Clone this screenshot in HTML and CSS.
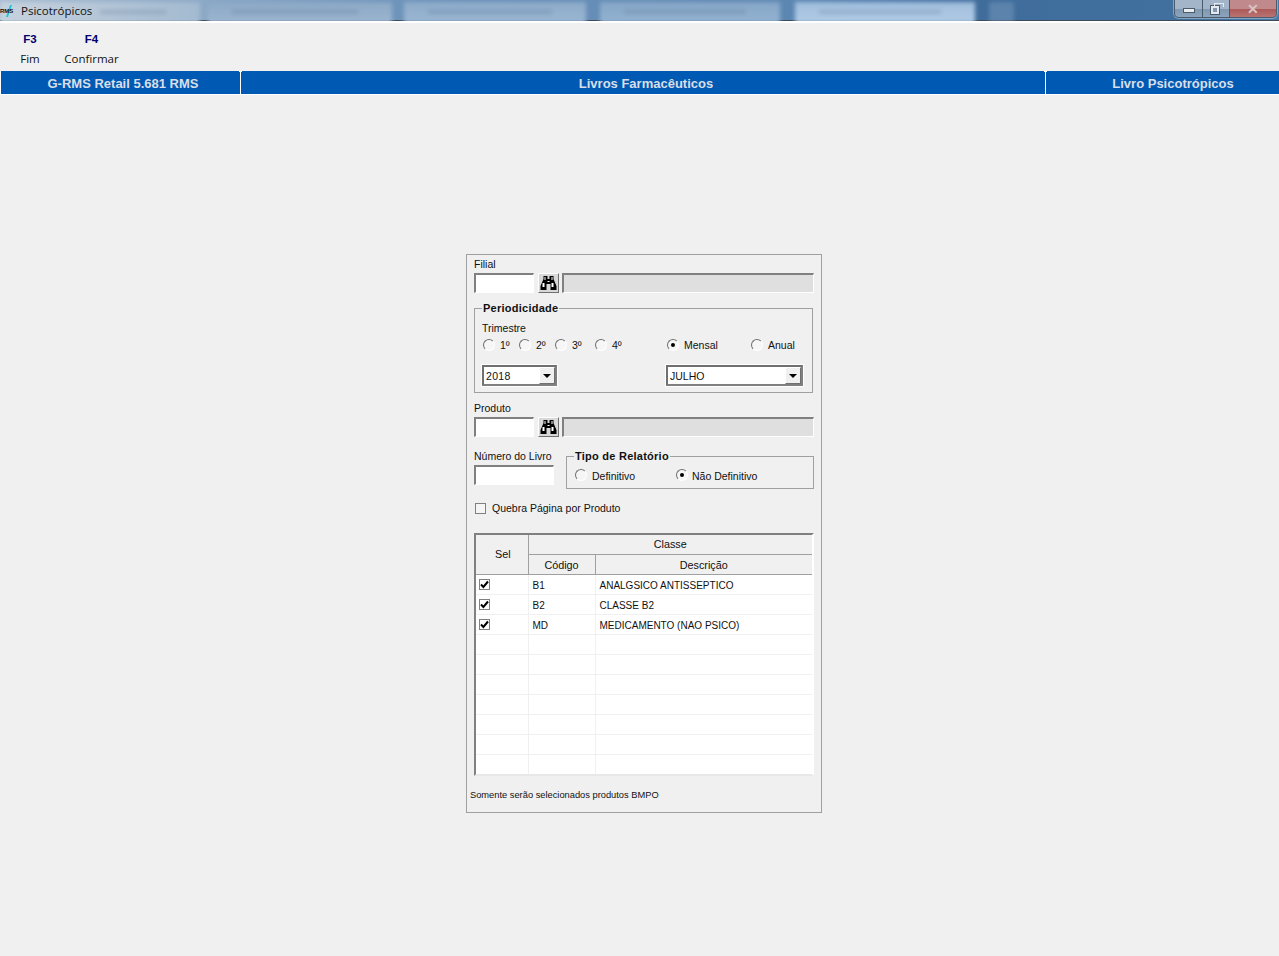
FILE: index.html
```html
<!DOCTYPE html>
<html lang="pt">
<head>
<meta charset="utf-8">
<title>Psicotrópicos</title>
<link rel="stylesheet" href="styles.css">
</head>
<body>
<header class="titlebar">
  <div class="tabs">
    <span class="tab t1"></span><span class="tab t2"></span><span class="tab t3"></span><span class="tab t4"></span><span class="tab t5"></span><span class="tab t6"></span>
  </div>
  <div class="app-title">
    <svg class="logo" width="17" height="12" viewBox="0 0 17 12"><path d="M6 12L10 0h2L8 12z" fill="#19c8d8"/><text x="0" y="8" font-family="Liberation Sans" font-size="6" font-weight="bold" fill="#111">RMS</text></svg>
    <span>Psicotrópicos</span>
  </div>
  <div class="win-buttons">
    <span class="win-btn min"><i></i></span>
    <span class="win-btn max"><i></i></span>
    <span class="win-btn close">✕</span>
  </div>
</header>

<nav class="toolbar">
  <div class="tool tool-fim"><b>F3</b><span>Fim</span></div>
  <div class="tool tool-conf"><b>F4</b><span>Confirmar</span></div>
</nav>

<div class="statusbar">
  <div class="cell c-a">G-RMS Retail 5.681 RMS</div>
  <div class="cell c-b">Livros Farmacêuticos</div>
  <div class="cell c-c">Livro Psicotrópicos</div>
</div>

<main class="stage">
  <form class="panel">
    <label class="lbl">Filial</label>
    <div class="lookup">
      <span class="field f60"></span>
      <span class="btn-find"><svg width="17" height="14" viewBox="0 0 16 14"><path d="M3 0h4v3h2V0h4v3l3 7v4H10V8H6v6H0v-4l3-7z" fill="#000"/><path d="M4 1h1v3H4zM11 1h1v3h-1zM2 7h2v4H2zM11 7h2v4h-2zM7 5h2v1H7z" fill="#fff"/></svg></span>
      <span class="field readonly"></span>
    </div>

    <fieldset class="group periodo">
      <legend>Periodicidade</legend>
      <div class="lbl trim">Trimestre</div>
      <div class="radios">
        <span class="opt w36"><i class="radio"></i>1º</span>
        <span class="opt w36"><i class="radio"></i>2º</span>
        <span class="opt w40"><i class="radio"></i>3º</span>
        <span class="opt w72"><i class="radio"></i>4º</span>
        <span class="opt w84"><i class="radio on"></i>Mensal</span>
        <span class="opt"><i class="radio"></i>Anual</span>
      </div>
      <div class="selects">
        <span class="select s75"><span>2018</span><i class="arrow"></i></span>
        <span class="select s137"><span>JULHO</span><i class="arrow"></i></span>
      </div>
    </fieldset>

    <label class="lbl lbl-prod">Produto</label>
    <div class="lookup">
      <span class="field f60"></span>
      <span class="btn-find"><svg width="17" height="14" viewBox="0 0 16 14"><path d="M3 0h4v3h2V0h4v3l3 7v4H10V8H6v6H0v-4l3-7z" fill="#000"/><path d="M4 1h1v3H4zM11 1h1v3h-1zM2 7h2v4H2zM11 7h2v4h-2zM7 5h2v1H7z" fill="#fff"/></svg></span>
      <span class="field readonly"></span>
    </div>

    <div class="book-row">
      <div class="book">
        <label class="lbl lbl-num">Número do Livro</label>
        <span class="field f80"></span>
      </div>
      <fieldset class="group tipo">
        <legend>Tipo de Relatório</legend>
        <div class="radios">
          <span class="opt w101"><i class="radio"></i>Definitivo</span>
          <span class="opt tighter"><i class="radio on"></i>Não Definitivo</span>
        </div>
      </fieldset>
    </div>

    <div class="quebra"><i class="check"></i>Quebra Página por Produto</div>

    <div class="grid-wrap">
      <table class="grid">
        <colgroup><col class="col-sel"><col class="col-cod"><col></colgroup>
        <thead>
          <tr class="head-top"><th rowspan="2" class="th-sel">Sel</th><th colspan="2">Classe</th></tr>
          <tr class="head-sub"><th>Código</th><th>Descrição</th></tr>
        </thead>
        <tbody>
          <tr><td class="td-sel"><i class="check checked"><svg width="9" height="9" viewBox="0 0 9 9"><path d="M1 4.5L3.4 7 8 1.5" fill="none" stroke="#000" stroke-width="2"/></svg></i></td><td>B1</td><td>ANALGSICO ANTISSEPTICO</td></tr>
          <tr><td class="td-sel"><i class="check checked"><svg width="9" height="9" viewBox="0 0 9 9"><path d="M1 4.5L3.4 7 8 1.5" fill="none" stroke="#000" stroke-width="2"/></svg></i></td><td>B2</td><td>CLASSE B2</td></tr>
          <tr><td class="td-sel"><i class="check checked"><svg width="9" height="9" viewBox="0 0 9 9"><path d="M1 4.5L3.4 7 8 1.5" fill="none" stroke="#000" stroke-width="2"/></svg></i></td><td>MD</td><td>MEDICAMENTO (NAO PSICO)</td></tr>
          <tr><td></td><td></td><td></td></tr>
          <tr><td></td><td></td><td></td></tr>
          <tr><td></td><td></td><td></td></tr>
          <tr><td></td><td></td><td></td></tr>
          <tr><td></td><td></td><td></td></tr>
          <tr><td></td><td></td><td></td></tr>
          <tr><td></td><td></td><td></td></tr>
        </tbody>
      </table>
    </div>

    <p class="note">Somente serão selecionados produtos BMPO</p>
  </form>
</main>
</body>
</html>
```

FILE: styles.css
```css
* { box-sizing: border-box; }
html, body { margin: 0; height: 956px; overflow: hidden; }
body {
  background: #f0f0f0;
  font-family: "Liberation Sans", Arial, sans-serif;
  font-size: 10.5px;
  color: #111;
}
i { display: block; font-style: normal; }

/* window title bar */
.titlebar {
  position: relative;
  height: 23px;
  overflow: hidden;
  background: linear-gradient(90deg, #a9bdd2 0, #6f94bb 400px, #5c86b2 800px, #3f6c9b 985px, #41709f 1170px, #4b79a6 1279px);
  border-bottom: 2px solid #fff;
  box-shadow: inset 0 -1px 0 #3c4a58;
}
.tabs {
  position: absolute;
  inset: 0 0 3px 0;
  display: flex;
  filter: blur(2px);
}
.tab {
  position: relative;
  display: block;
  flex: none;
  height: 21px;
  margin-top: 2px;
}
.tab::after {
  content: "";
  position: absolute;
  left: 24px;
  right: 34px;
  top: 8px;
  height: 4px;
  background: rgba(70, 95, 130, .22);
}
.t1 { width: 200px; margin-right: 8px; background: linear-gradient(90deg, #c6d2de, #a3bad0); }
.t1::after { left: 100px; }
.t2 { width: 184px; margin-right: 12px; background: linear-gradient(#8ba8c6, #9db6d0); }
.t3 { width: 182px; margin-right: 14px; background: linear-gradient(#8dabc9, #9ab6d2); }
.t4 { width: 180px; margin-right: 15px; background: linear-gradient(#86a6c7, #94b3d2); }
.t5 { width: 180px; margin-right: 14px; background: linear-gradient(#9fbddc, #b2cce6); }
.t6 { width: 25px; background: #7f9fc0; opacity: .45; }
.t6::after { display: none; }
.app-title {
  position: relative;
  display: flex;
  align-items: center;
  height: 21px;
  font-family: "Open Sans", sans-serif;
  font-size: 11.5px;
  color: #101010;
}
.logo { margin-right: 4px; }
.win-buttons {
  position: absolute;
  top: 0;
  right: 2px;
  display: flex;
  height: 18px;
  border: 1px solid #4a5b6c;
  border-top: 0;
  border-radius: 0 0 5px 5px;
  overflow: hidden;
  box-shadow: 0 0 0 1px rgba(255,255,255,.35);
}
.win-btn {
  display: flex;
  align-items: center;
  justify-content: center;
  height: 17px;
  background: linear-gradient(#a3b6c9 0, #a3b6c9 50%, #7f97af 55%, #8da5bc 100%);
  border-right: 1px solid #4a5b6c;
}
.min { width: 28px; }
.min i { width: 12px; height: 5px; margin-top: 4px; background: #e8edf2; border: 1px solid #4c5b6a; }
.max { width: 27px; }
.max i { position: relative; width: 8px; height: 8px; margin: 3px 2px 0 0; border: 2px solid #e4e9ef; outline: 1px solid #4c5b6a; background: #7f97af; }
.max i::before { content: ""; position: absolute; left: 0; top: -5px; width: 8px; height: 3px; margin-left: 1px; border: 1px solid #e4e9ef; border-bottom: 0; }
.close {
  width: 46px;
  border-right: 0;
  background: linear-gradient(#c08a8c 0, #c08a8c 50%, #ae5a58 55%, #b97472 100%);
  color: #d8c4c4;
  font-size: 14px;
  font-weight: bold;
}

/* function-key toolbar */
.toolbar {
  display: flex;
  height: 48px;
  padding-left: 20px;
  padding-top: 9px;
  font-family: "Open Sans", sans-serif;
  color: #111;
}
.tool { display: flex; flex-direction: column; align-items: center; }
.tool b { color: #00006e; font: bold 11.5px/14px "Liberation Sans", sans-serif; }
.tool span { line-height: 16px; margin-top: 5px; font-size: 11.5px; }
.tool-fim { width: 20px; }
.tool-conf { width: 55px; margin-left: 24px; }

/* blue band */
.statusbar {
  display: flex;
  height: 24px;
  background: #005ab4;
  color: #d9dfe9;
  font: bold 13px/25px "Liberation Sans", sans-serif;
  border-bottom: 1px solid #fff;
  border-left: 1px solid #fff;
}
.cell { position: relative; text-align: center; border-right: 1px solid #fff; }
.cell::after {
  content: "";
  position: absolute;
  right: -2px;
  top: 0;
  width: 3px;
  height: 1px;
  background: #fff;
}
.c-a { width: 240px; padding-left: 5px; }
.c-b { width: 805px; padding-left: 6px; }
.c-c { flex: 1; padding-left: 21px; border-right: 0; }
.c-c::after { display: none; }

/* centred dialog */
.stage { padding: 159px 0 0 466px; }
.panel {
  width: 356px;
  height: 559px;
  padding: 3px 7px 0 7px;
  border: 1px solid #a0a0a0;
}
.lbl { display: block; line-height: 13px; height: 13px; }
.lookup { display: flex; margin-top: 2px; height: 20px; }
.field {
  display: block;
  height: 20px;
  background: #fff;
  border: 2px solid;
  border-color: #808080 #fff #fff #808080;
  border-right-width: 1px;
  border-bottom-width: 1px;
}
.f60 { width: 60px; }
.f80 { width: 80px; margin-top: 2px; }
.readonly { width: 252px; margin-left: 3px; background: #dfdfdf; }
.btn-find {
  display: flex;
  align-items: center;
  justify-content: center;
  width: 21px;
  height: 20px;
  margin-left: 4px;
  background: #d8d8d8;
  border: 1px solid;
  border-color: #fff #707070 #707070 #fff;
}

.group {
  margin: 0;
  padding: 0 7px;
  border: 1px solid #a0a0a0;
  min-width: 0;
}
.group legend {
  padding: 0 1px;
  margin-left: 0;
  font: bold 11px/14px "Liberation Sans", sans-serif;
  letter-spacing: .25px;
  color: #111;
}
.periodo { width: 339px; height: 92px; margin-top: 8px; }
.trim { margin-top: 7px; }
.radios { display: flex; align-items: center; height: 14px; margin-top: 3px; padding-left: 1px; }
.opt { display: flex; align-items: center; line-height: 14px; }
.w36 { width: 36px; }
.w40 { width: 40px; }
.w72 { width: 72px; }
.w84 { width: 84px; }
.w101 { width: 101px; }
.radio {
  position: relative;
  flex: none;
  width: 12px;
  height: 12px;
  margin-right: 5px;
  border: 1px solid;
  border-color: #707070 #fff #fff #707070;
  border-radius: 50%;
  background: #f6f6f6;
}
.tighter .radio { margin-right: 4px; }
.radio.on::after {
  content: "";
  position: absolute;
  left: 3px;
  top: 3px;
  width: 4px;
  height: 4px;
  border-radius: 50%;
  background: #000;
}
.selects { display: flex; justify-content: space-between; margin-top: 13px; padding-right: 2px; }
.select {
  display: flex;
  align-items: center;
  justify-content: space-between;
  height: 21px;
  padding-left: 2px;
  background: #fff;
  border: 2px solid;
  border-color: #707070 #808080 #808080 #707070;
  outline: 1px solid #fff;
  outline-offset: 0;
  font-size: 10.5px;
}
.s75 { width: 75px; letter-spacing: .3px; }
.s137 { width: 137px; }
.arrow {
  position: relative;
  width: 16px;
  height: 17px;
  background: #f0f0f0;
  border: 1px solid;
  border-color: #fff #707070 #707070 #fff;
}
.arrow::after {
  content: "";
  position: absolute;
  left: 3px;
  top: 6px;
  border: 4px solid transparent;
  border-top: 4px solid #000;
  border-bottom: 0;
}

.lbl-prod { margin-top: 9px; }
.book-row { display: flex; align-items: flex-start; margin-top: 13px; }
.book { width: 92px; }
.lbl-num { margin-top: 0; }
.tipo { width: 248px; height: 40px; margin-top: -1px; padding: 0 8px; }
.tipo legend { margin-left: -1px; }
.tipo .radios { margin-top: 6px; padding-left: 0; }
.tipo .radio { margin-bottom: 2px; }
.quebra { display: flex; align-items: center; height: 14px; margin-top: 12px; }
.quebra .check { margin-right: 6px; margin-left: 1px; background: #f5f5f5; }
.check {
  display: flex;
  align-items: center;
  justify-content: center;
  flex: none;
  width: 11px;
  height: 11px;
  border: 1px solid #808080;
  background: #fff;
}
.grid-wrap {
  width: 340px;
  height: 243px;
  margin-top: 18px;
  background: #fff;
  border: 2px solid;
  border-color: #808080 #fff #e8e8e8 #808080;
}
.grid { width: 100%; border-collapse: collapse; table-layout: fixed; font-size: 10px; }
.col-sel { width: 52px; }
.col-cod { width: 67px; }
.grid th {
  height: 20px;
  padding: 0;
  background: #f0f0f0;
  font-weight: normal;
  font-size: 10.8px;
  border: 1px solid #a0a0a0;
  border-top: 0;
  border-left: 0;
}
.head-top th { height: 19px; }
.head-sub th { padding-top: 2px; }
.grid .th-sel { padding-left: 2px; }
.grid th:last-child { border-right: 0; }
.grid td {
  height: 20px;
  padding: 2px 3px 0 4px;
  border: 1px solid #f0f0f0;
  border-top: 0;
  border-left: 0;
  white-space: nowrap;
}
.grid .td-sel { padding: 0 0 0 3px; }
.grid td:last-child { border-right: 0; }
.grid tr:last-child td { border-bottom: 0; }
.note { margin: 13px 0 0 -4px; font-size: 9.3px; line-height: 13px; }
```
